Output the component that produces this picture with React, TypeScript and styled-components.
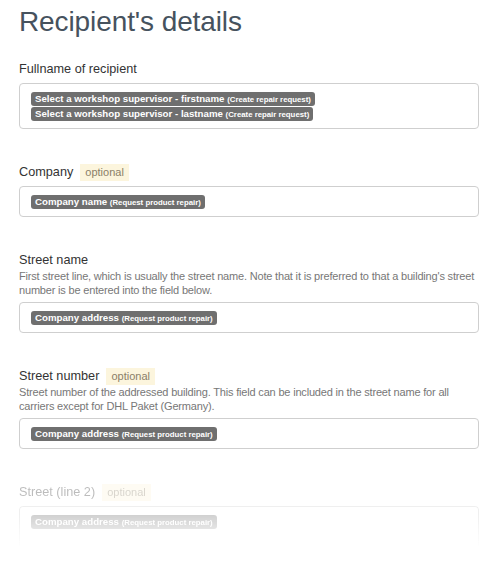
import React from 'react';
import styled, { createGlobalStyle } from 'styled-components';

const GlobalStyle = createGlobalStyle`
  body {
    margin: 0;
    background: #ffffff;
    font-family: 'Liberation Sans', Helvetica, Arial, sans-serif;
  }
`;

const Page = styled.div`
  padding: 5px 23px 0 19px;
  height: 564px;
  box-sizing: border-box;
  overflow: hidden;
`;

const Title = styled.h1`
  margin: 0 0 21px 0;
  font-size: 28px;
  line-height: 34px;
  font-weight: 400;
  color: #46525e;
  letter-spacing: -0.1px;
`;

const Field = styled.div<{ $faded?: boolean }>`
  margin-bottom: 34px;
  opacity: ${({ $faded }) => ($faded ? 0.32 : 1)};
`;

const LabelRow = styled.div`
  display: flex;
  align-items: center;
  gap: 7px;
  height: 18px;
`;

const Label = styled.label`
  font-size: 12.7px;
  line-height: 18px;
  color: #333333;
`;

const Optional = styled.span`
  display: inline-block;
  padding: 0 5px;
  height: 17px;
  line-height: 17px;
  font-size: 11px;
  color: #8b8068;
  background: #fcf5dd;
`;

const Description = styled.p`
  margin: 0;
  font-size: 11px;
  line-height: 14px;
  letter-spacing: -0.18px;
  color: #777777;
`;

const Box = styled.div<{ $fade?: boolean }>`
  margin-top: 5px;
  padding: 8px 11px 7px;
  border: 1px solid #cfcfcf;
  border-radius: 4px;
  display: flex;
  flex-direction: column;
  align-items: flex-start;
  gap: 1px;
  ${({ $fade }) =>
    $fade &&
    `
    -webkit-mask-image: linear-gradient(to bottom, #000 20%, transparent 95%);
    mask-image: linear-gradient(to bottom, #000 20%, transparent 95%);
    height: 28px;
    border-bottom: none;
  `}
`;

const Tag = styled.span`
  display: inline-block;
  height: 14px;
  line-height: 14px;
  padding: 0 4px;
  border-radius: 3px;
  background: #6f6f6f;
  color: #ffffff;
  font-size: 9.7px;
  font-weight: 700;
  white-space: nowrap;
`;

const TagSource = styled.span`
  font-size: 7.8px;
`;

type Placeholder = { name: string; source: string };

type FieldDef = {
  label: string;
  optional?: boolean;
  description?: string;
  tags: Placeholder[];
};

const fields: FieldDef[] = [
  {
    label: 'Fullname of recipient',
    tags: [
      { name: 'Select a workshop supervisor - firstname', source: 'Create repair request' },
      { name: 'Select a workshop supervisor - lastname', source: 'Create repair request' },
    ],
  },
  {
    label: 'Company',
    optional: true,
    tags: [{ name: 'Company name', source: 'Request product repair' }],
  },
  {
    label: 'Street name',
    description:
      "First street line, which is usually the street name. Note that it is preferred to that a building's street number is be entered into the field below.",
    tags: [{ name: 'Company address', source: 'Request product repair' }],
  },
  {
    label: 'Street number',
    optional: true,
    description:
      'Street number of the addressed building. This field can be included in the street name for all carriers except for DHL Paket (Germany).',
    tags: [{ name: 'Company address', source: 'Request product repair' }],
  },
  {
    label: 'Street (line 2)',
    optional: true,
    tags: [{ name: 'Company address', source: 'Request product repair' }],
  },
];

const App = (): JSX.Element => {
  return (
    <>
      <GlobalStyle />
      <Page>
        <Title>Recipient's details</Title>
        {fields.map((field, i) => {
          const last = i === fields.length - 1;
          return (
            <Field key={field.label} $faded={last}>
              <LabelRow>
                <Label>{field.label}</Label>
                {field.optional && <Optional>optional</Optional>}
              </LabelRow>
              {field.description && <Description>{field.description}</Description>}
              <Box $fade={last}>
                {field.tags.map((tag) => (
                  <Tag key={tag.name}>
                    {tag.name} <TagSource>({tag.source})</TagSource>
                  </Tag>
                ))}
              </Box>
            </Field>
          );
        })}
      </Page>
    </>
  );
};

export default App;
